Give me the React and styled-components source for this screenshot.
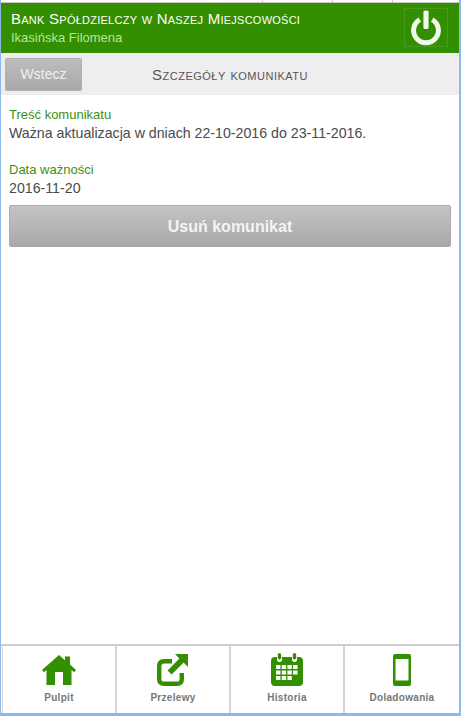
import React from "react";
import styled, { createGlobalStyle } from "styled-components";

const GlobalStyle = createGlobalStyle`
  html, body {
    margin: 0;
    padding: 0;
    background: #fff;
  }
  * {
    box-sizing: border-box;
  }
`;

const GREEN = "#338e00";

const App = () => {
  return (
    <>
      <GlobalStyle />
      <Page>
        <TopStrip>
          <Tick $gap={69} />
          <Tick $gap={59} />
          <Tick />
        </TopStrip>
        <Header>
          <HeaderText>
            <BankName>Bank Spółdzielczy w Naszej Miejscowości</BankName>
            <UserName>Ikasińska Filomena</UserName>
          </HeaderText>
          <PowerButton aria-label="Wyloguj">
            <svg width="34" height="36" viewBox="0 0 34 36">
              <path
                d="M10.8 9.6 A12.4 12.4 0 1 0 23.2 9.6"
                fill="none"
                stroke="#f0f8ea"
                strokeWidth="5"
              />
              <rect x="14.4" y="0.5" width="5.2" height="18.5" rx="1.6" fill="#f0f8ea" />
            </svg>
          </PowerButton>
        </Header>
        <Toolbar>
          <BackButton>Wstecz</BackButton>
          <ToolbarTitle>Szczegóły komunikatu</ToolbarTitle>
        </Toolbar>
        <Content>
          <Field>
            <Label>Treść komunikatu</Label>
            <Value>Ważna aktualizacja w dniach 22-10-2016 do 23-11-2016.</Value>
          </Field>
          <Field>
            <Label>Data ważności</Label>
            <Value>2016-11-20</Value>
          </Field>
          <DeleteButton>Usuń komunikat</DeleteButton>
        </Content>
        <Nav>
          <NavItem>
            <NavIcon>
              <svg width="34" height="30" viewBox="0 0 34 30">
                <path
                  fill={GREEN}
                  d="M17 0 L23 5.2 V1.5 H28 V9.6 L34 15 L32 17.2 L29.5 15 V30 H21 V17 H13 V30 H4.5 V15 L2 17.2 L0 15 Z"
                />
              </svg>
            </NavIcon>
            <NavLabel>Pulpit</NavLabel>
          </NavItem>
          <NavItem>
            <NavIcon>
              <svg width="32" height="32" viewBox="0 0 32 32">
                <path
                  fill="none"
                  stroke={GREEN}
                  strokeWidth="4.4"
                  d="M15 7.2 H7 Q2.2 7.2 2.2 12 V25 Q2.2 29.8 7 29.8 H20 Q24.8 29.8 24.8 25 V19"
                />
                <path fill={GREEN} d="M18 0 H31 V13 L26.6 8.6 L14.6 20.4 L10.6 16.4 L22.4 4.4 Z" />
              </svg>
            </NavIcon>
            <NavLabel>Przelewy</NavLabel>
          </NavItem>
          <NavItem>
            <NavIcon>
              <svg width="32" height="33" viewBox="0 0 32 33">
                <path
                  fill={GREEN}
                  d="M4 4 H6 V6.5 A2.5 2.5 0 0 0 11 6.5 V4 H21 V6.5 A2.5 2.5 0 0 0 26 6.5 V4 H28 Q32 4 32 8 V29 Q32 33 28 33 H4 Q0 33 0 29 V8 Q0 4 4 4 Z"
                />
                <rect x="6.8" y="0" width="3.4" height="6.5" rx="1.7" fill={GREEN} />
                <rect x="21.8" y="0" width="3.4" height="6.5" rx="1.7" fill={GREEN} />
                {[12, 17.5, 23].map((y, row) =>
                  [5, 10.7, 16.4, 22.1].map((x, col) =>
                    row === 2 && col === 3 ? null : (
                      <rect key={`${row}-${col}`} x={x} y={y} width="4.4" height="4" fill="#fff" />
                    )
                  )
                )}
              </svg>
            </NavIcon>
            <NavLabel>Historia</NavLabel>
          </NavItem>
          <NavItem>
            <NavIcon>
              <svg width="18" height="32" viewBox="0 0 18 32">
                <rect width="18" height="32" rx="2" fill={GREEN} />
                <rect x="2.5" y="5" width="13" height="21.5" rx="0.5" fill="#fff" />
              </svg>
            </NavIcon>
            <NavLabel>Doladowania</NavLabel>
          </NavItem>
        </Nav>
      </Page>
    </>
  );
};

// STYLED COMPONENTS

const Page = styled.div`
  width: 461px;
  height: 716px;
  display: flex;
  flex-direction: column;
  background: #fff;
  border-left: 1px solid #8db9e6;
  border-right: 2px solid #8db9e6;
  border-bottom: 3px solid #8db9e6;
  font-family: "Liberation Sans", Arial, sans-serif;
  overflow: hidden;
`;

const TopStrip = styled.div`
  height: 3px;
  flex-shrink: 0;
  display: flex;
  justify-content: flex-end;
  padding-right: 66px;
  border-bottom: 1px solid #c8c8c8;
`;

const Tick = styled.span`
  width: 1px;
  margin-right: ${(props) => props.$gap || 0}px;
  background: #c8c8c8;
`;

const Header = styled.header`
  height: 50px;
  flex-shrink: 0;
  display: flex;
  align-items: center;
  justify-content: space-between;
  padding: 0 11px 1px 10px;
  background: ${GREEN};
`;

const HeaderText = styled.div`
  display: flex;
  flex-direction: column;
  gap: 3px;
`;

const BankName = styled.div`
  font-size: 15px;
  letter-spacing: 0.25px;
  line-height: 17px;
  font-variant: small-caps;
  color: #fff;
  white-space: nowrap;
`;

const UserName = styled.div`
  font-size: 13px;
  line-height: 15px;
  color: #b5e89c;
`;

const PowerButton = styled.button`
  width: 44px;
  height: 39px;
  padding: 0;
  display: flex;
  align-items: center;
  justify-content: center;
  background: ${GREEN};
  border: 1px solid #469a1c;
`;

const Toolbar = styled.div`
  height: 42px;
  flex-shrink: 0;
  display: flex;
  align-items: center;
  padding: 0 4px;
  background: #eeeeee;
`;

const BackButton = styled.button`
  width: 77px;
  height: 33px;
  padding: 0;
  background: linear-gradient(#bdbdbd, #a9a9a9);
  border: 1px solid #b0b0b0;
  border-radius: 2px;
  color: #f0f0f0;
  font-family: inherit;
  font-size: 14px;
`;

const ToolbarTitle = styled.div`
  margin-left: 70px;
  font-size: 15px;
  letter-spacing: 0.5px;
  font-variant: small-caps;
  color: #555;
  white-space: nowrap;
`;

const Content = styled.main`
  flex: 1;
  padding: 12px 8px 0;
`;

const Field = styled.div`
  & + & {
    margin-top: 19px;
  }
`;

const Label = styled.div`
  font-size: 13px;
  line-height: 15px;
  color: #3f8f10;
`;

const Value = styled.div`
  margin-top: 1px;
  font-size: 14.2px;
  line-height: 20px;
  color: #4a4a4a;
`;

const DeleteButton = styled.button`
  display: block;
  width: 442px;
  height: 42px;
  margin-top: 7px;
  padding: 1px 0 0;
  background: linear-gradient(#c4c4c4, #a8a8a8);
  border: 1px solid #aaa;
  border-radius: 2px;
  color: #f4f4f4;
  font-family: inherit;
  font-size: 16px;
  font-weight: bold;
`;

const Nav = styled.nav`
  height: 69px;
  flex-shrink: 0;
  display: grid;
  grid-template-columns: 115px repeat(3, 114px);
  padding-left: 1px;
  border-top: 2px solid #cfcfcf;
`;

const NavItem = styled.a`
  display: flex;
  flex-direction: column;
  align-items: center;
  padding-top: 6px;
  border-right: 2px solid #d4d4d4;
  &:first-child {
    border-left: 1px solid #d4d4d4;
  }
  &:last-child {
    border-right: none;
  }
`;

const NavIcon = styled.div`
  height: 35px;
  display: flex;
  align-items: center;
  justify-content: center;
`;

const NavLabel = styled.div`
  margin-top: 5px;
  font-size: 10px;
  line-height: 12px;
  font-weight: bold;
  letter-spacing: 0.3px;
  color: #777;
`;

export default App;
